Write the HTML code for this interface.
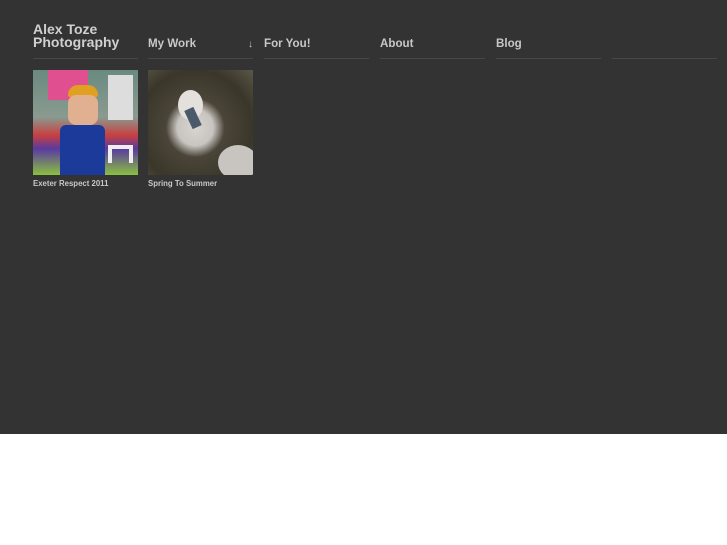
<!DOCTYPE html>
<html><head><meta charset="utf-8"><style>
*{margin:0;padding:0;box-sizing:border-box}
body{width:727px;height:545px;background:#fff;font-family:"Liberation Sans",sans-serif;overflow:hidden}
#top{position:absolute;left:0;top:0;width:727px;height:434px;background:#333}
.col{position:absolute;top:0;width:105px;height:59px;border-bottom:1px solid #474747;color:#c8c8c8;font-weight:bold}
.nav{font-size:11.6px;position:absolute;top:37px;left:0}
.logo{position:absolute;left:0;top:23px;font-size:14px;line-height:13px;color:#d0d0d0;font-weight:bold}
.arrow{position:absolute;right:0;top:39px;font-size:10px;font-weight:normal}
.th{position:absolute;top:70px;width:105px;height:105px;overflow:hidden}
.cap{position:absolute;top:179px;font-size:7.8px;font-weight:bold;color:#c8c8c8}
</style></head><body>
<div id="top">
<div class="col" style="left:33px"><div class="logo">Alex Toze<br>Photography</div></div>
<div class="col" style="left:148px"><div class="nav">My Work</div><div class="arrow">↓</div></div>
<div class="col" style="left:264px"><div class="nav">For You!</div></div>
<div class="col" style="left:380px"><div class="nav">About</div></div>
<div class="col" style="left:496px"><div class="nav">Blog</div></div>
<div class="col" style="left:612px"></div>

<div class="th" style="left:33px;background:linear-gradient(180deg,#6a8a80 0%,#8a9a90 45%,#c84040 62%,#5a3aa0 75%,#8ac040 100%)">
 <div style="position:absolute;left:15px;top:0;width:40px;height:30px;background:#e05090"></div>
 <div style="position:absolute;left:75px;top:5px;width:25px;height:45px;background:#ddd"></div>
 <div style="position:absolute;left:35px;top:15px;width:30px;height:12px;background:#e0a020;border-radius:10px 10px 2px 2px"></div>
 <div style="position:absolute;left:35px;top:25px;width:30px;height:30px;background:#e0b090;border-radius:8px"></div>
 <div style="position:absolute;left:27px;top:55px;width:45px;height:50px;background:#1c3a9a;border-radius:6px 6px 0 0"></div>
 <div style="position:absolute;left:75px;top:75px;width:25px;height:18px;border:4px solid #eee;border-bottom:none"></div>
</div>
<div class="th" style="left:148px;background:radial-gradient(circle at 45% 55%,#d8d4d0 0,#c8c4c0 22%,#4a4538 36%,#3a362a 70%,#5a5848 100%)">
 <div style="position:absolute;left:30px;top:20px;width:25px;height:30px;background:#e4e0dc;border-radius:50%"></div>
 <div style="position:absolute;left:40px;top:38px;width:10px;height:20px;background:#4a5a6a;transform:rotate(-25deg)"></div>
 <div style="position:absolute;left:70px;top:75px;width:40px;height:35px;background:#c8c4c0;border-radius:50%"></div>
</div>
<div class="cap" style="left:33px">Exeter Respect 2011</div>
<div class="cap" style="left:148px">Spring To Summer</div>
</div>
</body></html>
